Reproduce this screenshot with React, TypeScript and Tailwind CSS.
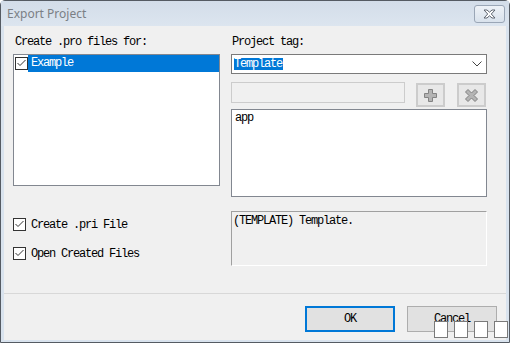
import React from "react";

const mono = "font-['Liberation_Mono','DejaVu_Sans_Mono',monospace] text-[12px] tracking-[-1.2px]";

function Check() {
  return (
    <div className="w-[13px] h-[13px] shrink-0 border border-[#333333] bg-white flex items-center justify-center">
      <svg width="11" height="11" viewBox="0 0 11 11">
        <polyline points="1.5,5 4,7.5 9.5,2" fill="none" stroke="#333333" strokeWidth="1" />
      </svg>
    </div>
  );
}

function CheckRow({ label, className }: { label: string; className?: string }) {
  return (
    <div className={"flex items-center h-[13px] " + (className ?? "")}>
      <Check />
      <span className={"ml-[5px] leading-[14px] text-black whitespace-pre " + mono}>{label}</span>
    </div>
  );
}

export default function App() {
  return (
    <div className="relative w-[510px] h-[343px] overflow-hidden">
      <div className="w-[510px] h-[343px] border border-[#555b63] rounded-t-[5px] bg-[#d9e3ee] flex flex-col">
        {/* Title bar */}
        <div className="h-[25px] shrink-0 flex items-start justify-between pl-[6px] pr-[4px] bg-gradient-to-b from-[#d3dde9] to-[#dce5ef]">
          <span className="mt-[5px] font-['Noto_Sans',sans-serif] text-[12px] leading-[16px] text-[#7b7f85]">
            Export Project
          </span>
          <div className="mt-[4px] w-[31px] h-[18px] rounded-[3px] border border-[#9aa6b6] bg-gradient-to-b from-[#eef2f7] to-[#d9e2ec] flex items-center justify-center">
            <svg width="13" height="10" viewBox="0 0 13 10">
              <polygon
                points="1,1 4,1 6.5,3.2 9,1 12,1 8.3,5 12,9 9,9 6.5,6.8 4,9 1,9 4.7,5"
                fill="#ffffff"
                stroke="#5e6570"
                strokeWidth="1"
                strokeLinejoin="round"
              />
            </svg>
          </div>
        </div>

        {/* Client area */}
        <div className="flex-1 mx-[3px] mb-[2px] bg-[#f0f0f0] flex flex-col">
          <div className="h-[267px] shrink-0 flex pl-[9px] pt-[9px]">
            {/* Left column */}
            <div className="w-[207px] flex flex-col">
              <div className={"h-[14px] leading-[14px] pl-[2px] text-black whitespace-pre " + mono}>Create .pro files for:</div>
              <div className="mt-[5px] h-[132px] border border-[#828790] bg-white pt-[0px]">
                <div className="h-[17px] flex items-center pl-[1px] pr-[0px]">
                  <Check />
                  <div className={"flex-1 h-[17px] bg-[#0078d7] text-white pl-[3px] leading-[17px] " + mono}>Example</div>
                </div>
              </div>
              <CheckRow label="Create .pri File" className="mt-[32px]" />
              <CheckRow label="Open Created Files" className="mt-[16px]" />
            </div>

            {/* Right column */}
            <div className="w-[256px] ml-[11px] flex flex-col">
              <div className={"h-[14px] leading-[14px] pl-[1px] text-black whitespace-pre " + mono}>Project tag:</div>
              <div className="mt-[5px] h-[20px] border border-[#7a7a7a] bg-white flex items-center justify-between pl-[2px] pr-[4px]">
                <span className={"h-[12px] leading-[12px] bg-[#0078d7] text-white pr-[1px] " + mono}>Template</span>
                <svg width="10" height="6" viewBox="0 0 10 6">
                  <polyline points="0.5,0.5 5,5 9.5,0.5" fill="none" stroke="#444444" strokeWidth="1" />
                </svg>
              </div>
              <div className="mt-[8px] h-[25px] flex items-start">
                <div className="w-[174px] h-[21px] border border-[#cccccc] bg-[#f0f0f0]" />
                <div className="ml-[11px] mt-[1px] w-[29px] h-[24px] border-2 border-[#cccccc] bg-[#e8e8e8] flex items-center justify-center">
                  <svg width="15" height="15" viewBox="0 0 15 15">
                    <polygon
                      points="5.5,1.5 9.5,1.5 9.5,5.5 13.5,5.5 13.5,9.5 9.5,9.5 9.5,13.5 5.5,13.5 5.5,9.5 1.5,9.5 1.5,5.5 5.5,5.5"
                      fill="#b4b4b4"
                      stroke="#838383"
                      strokeWidth="1"
                    />
                  </svg>
                </div>
                <div className="ml-[12px] mt-[1px] w-[29px] h-[24px] border-2 border-[#cccccc] bg-[#e8e8e8] flex items-center justify-center">
                  <svg width="15" height="15" viewBox="0 0 15 15">
                    <polygon
                      points="1.5,4 4,1.5 7.5,5 11,1.5 13.5,4 10,7.5 13.5,11 11,13.5 7.5,10 4,13.5 1.5,11 5,7.5"
                      fill="#b4b4b4"
                      stroke="#808080"
                      strokeWidth="1"
                      strokeLinejoin="round"
                    />
                  </svg>
                </div>
              </div>
              <div className="mt-[2px] h-[88px] border border-[#828790] bg-white pl-[3px] pt-[1px]">
                <div className={"leading-[14px] text-black " + mono}>app</div>
              </div>
              <div className="mt-[14px] h-[55px] border border-t-[#a0a0a0] border-l-[#a0a0a0] border-b-white border-r-white bg-[#f0f0f0] pl-[1px] pt-[2px]">
                <div className={"leading-[14px] text-black whitespace-pre " + mono}>(TEMPLATE) Template.</div>
              </div>
            </div>
          </div>

          <div className="h-px shrink-0 bg-[#d8d8d8]" />

          <div className="flex justify-end pt-[12px] pr-[9px] gap-[12px]">
            <div className="w-[90px] h-[26px] border-2 border-[#0078d7] bg-[#e1e1e1] flex items-center justify-center">
              <span className={"text-black leading-[14px] " + mono}>OK</span>
            </div>
            <div className="w-[90px] h-[26px] border border-[#adadad] bg-[#e1e1e1] flex items-center justify-center">
              <span className={"text-black leading-[14px] " + mono}>Cancel</span>
            </div>
          </div>
        </div>
      </div>

      {/* Overlay squares */}
      <div className="absolute left-[434px] top-[321px] flex gap-[6px]">
        <div className="w-[14px] h-[17px] border border-[#7a7a7a] bg-white" />
        <div className="w-[14px] h-[17px] border border-[#7a7a7a] bg-white" />
        <div className="w-[14px] h-[17px] border border-[#7a7a7a] bg-white" />
        <div className="w-[14px] h-[17px] border border-[#7a7a7a] bg-white" />
      </div>
    </div>
  );
}
